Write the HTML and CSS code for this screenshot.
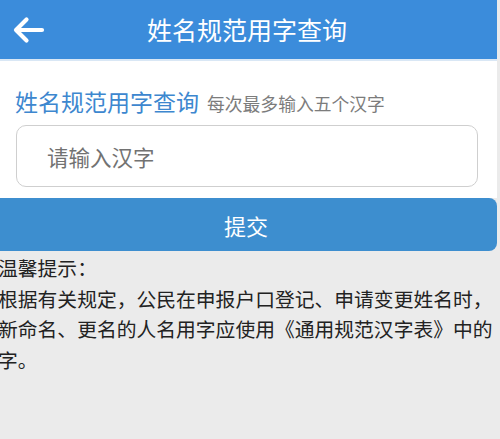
FILE: index.html
```html
<!DOCTYPE html>
<html lang="zh-CN">
<head>
<meta charset="utf-8">
<title>姓名规范用字查询</title>
<link rel="stylesheet" href="styles.css">
</head>
<body>
<div class="app">
  <header class="topbar">
    <span class="back">
      <svg width="32" height="28" viewBox="0 0 32 28">
        <path d="M3 14 H29 M3 14 L13.5 3.5 M3 14 L13.5 24.5" fill="none" stroke="#fff" stroke-width="4.2" stroke-linecap="round" stroke-linejoin="round"/>
      </svg>
    </span>
    <h1 class="title">姓名规范用字查询</h1>
  </header>
  <section class="form">
    <div class="label-row">
      <span class="label">姓名规范用字查询</span>
      <span class="hint">每次最多输入五个汉字</span>
    </div>
    <div class="input">请输入汉字</div>
  </section>
  <div class="submit">提交</div>
  <div class="tips">
    <p class="tip-line">温馨提示：</p>
    <p class="tip-line">根据有关规定，公民在申报户口登记、申请变更姓名时，新命名、更名的人名用字应使用《通用规范汉字表》中的字。</p>
  </div>
</div>
</body>
</html>
```
FILE: styles.css
```css
html, body {
  margin: 0;
  padding: 0;
}
body {
  background: #ebebeb;
  width: 500px;
  height: 439px;
  overflow: hidden;
  font-family: "Noto Sans CJK SC", "Noto Sans", sans-serif;
}
.app {
  width: 497px;
}
.topbar {
  height: 59px;
  background: #3b8cdb;
  border-bottom: 2px solid #d9e7f5;
  display: flex;
  align-items: center;
  position: relative;
}
.back {
  display: flex;
  margin-left: 13px;
  margin-top: 1px;
}
.title {
  position: absolute;
  left: 0;
  right: 0;
  top: 0;
  margin: 0;
  text-align: center;
  font-weight: normal;
  color: #fff;
  font-size: 25px;
  line-height: 59px;
  padding-right: 3px;
  pointer-events: none;
}
.form {
  background: #fff;
  padding: 25px 19px 11px 16px;
}
.label-row {
  display: flex;
  align-items: baseline;
  height: 30px;
  line-height: 30px;
  margin-left: -1px;
}
.label {
  color: #3d87cf;
  font-size: 23px;
}
.hint {
  color: #7c7c7c;
  font-size: 17.8px;
  margin-left: 8px;
}
.input {
  margin-top: 9px;
  height: 60px;
  border: 1px solid #cfcfcf;
  border-radius: 10px;
  box-sizing: content-box;
  display: flex;
  align-items: center;
  padding-left: 30px;
  font-size: 21.5px;
  color: #727272;
}
.submit {
  margin-left: -8px;
  height: 53px;
  background: #3d8ecf;
  border-radius: 8px;
  color: #fff;
  font-size: 22px;
  display: flex;
  align-items: center;
  justify-content: center;
  padding-left: 3px;
}
.tips {
  margin-top: 2px;
  margin-left: -2px;
  width: 500px;
  color: #222;
  font-size: 19.8px;
  line-height: 30.5px;
}
.tip-line {
  margin: 0;
}
```
